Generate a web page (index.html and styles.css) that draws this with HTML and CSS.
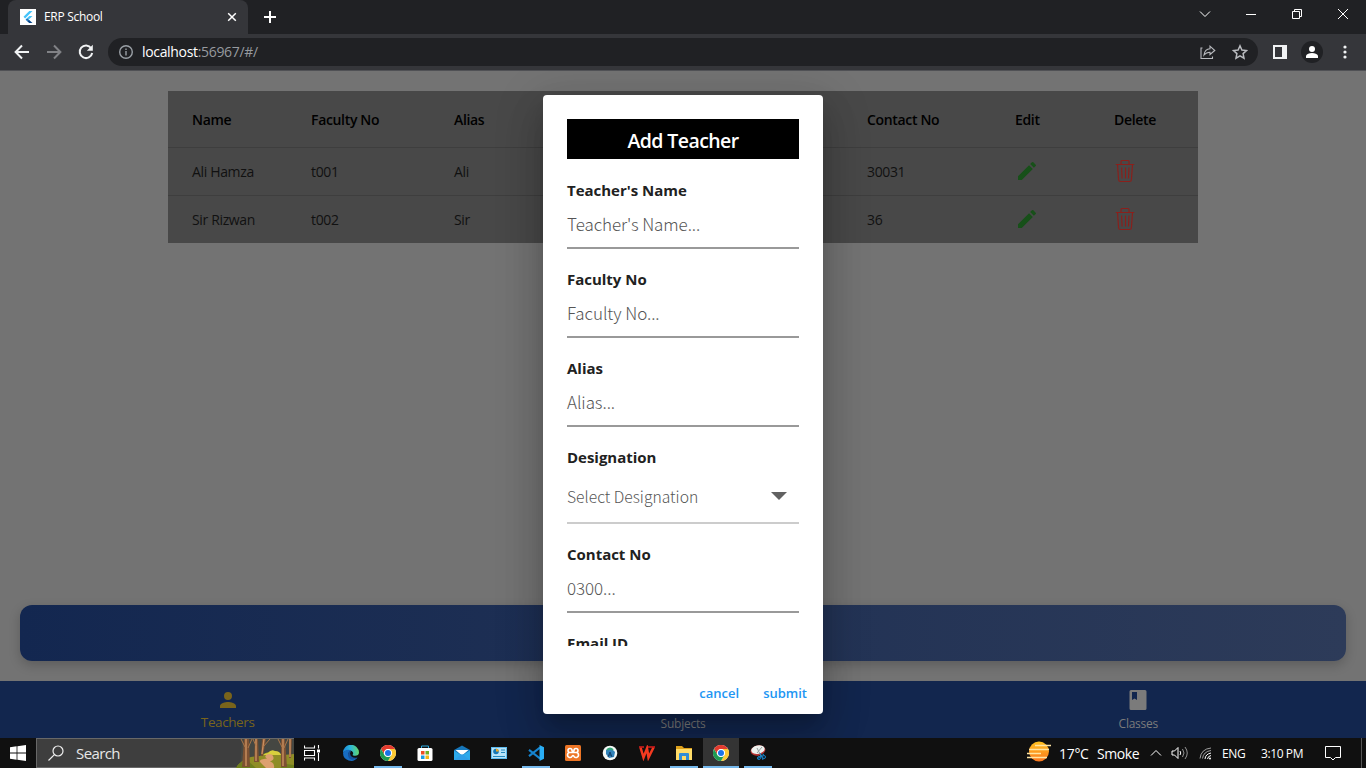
FILE: index.html
```html
<!DOCTYPE html>
<html lang="en">
<head>
<meta charset="utf-8">
<title>ERP School</title>
<link rel="stylesheet" href="styles.css">
</head>
<body>
<svg class="defs" width="0" height="0">
  <defs>
    <linearGradient id="edge" x1="0" y1="0" x2="1" y2="0"><stop offset="0" stop-color="#1b86d8"/><stop offset=".45" stop-color="#2bb5dc"/><stop offset="1" stop-color="#62d56c"/></linearGradient>
    <linearGradient id="sun" x1="0" y1="0" x2="0" y2="1"><stop offset="0" stop-color="#ffc21f"/><stop offset="1" stop-color="#fb761e"/></linearGradient>
    <symbol id="chrome" viewBox="0 0 24 24">
      <circle cx="12" cy="12" r="12" fill="#fff"/>
      <path d="M1.6 6A12 12 0 0 1 22.4 6H12a6 6 0 0 0-5.2 9z" fill="#e33b2e"/>
      <path d="M22.4 6A12 12 0 0 1 12 24l5.2-9A6 6 0 0 0 12 6z" fill="#fcc934"/>
      <path d="M12 24A12 12 0 0 1 1.6 6l5.2 9a6 6 0 0 0 10.4 0z" fill="#1e9b52"/>
      <circle cx="12" cy="12" r="5.8" fill="#fff"/><circle cx="12" cy="12" r="4.5" fill="#1a73e8"/>
    </symbol>
    <symbol id="pencil" viewBox="0 0 24 24"><path d="M3 17.25V21h3.75L17.81 9.94l-3.75-3.75L3 17.25zM20.71 7.04a1 1 0 0 0 0-1.41l-2.34-2.34a1 1 0 0 0-1.41 0l-1.83 1.83 3.75 3.75 1.83-1.83z"/></symbol>
    <symbol id="trash" viewBox="0 0 20 24"><path d="M.8 5.5h18.400M6 5V2.600q0-1.100 1.100-1.100h5.800q1.100 0 1.100 1.100V5M2.500 5.500l1.100 15.200q.1 1.800 1.900 1.800h9q1.800 0 1.900-1.800L17.500 5.500M6.600 8.500l.5 11M10.500 8.500v11M14 8.500l-.5 11" fill="none" stroke="currentColor" stroke-width="1.150"/></symbol>
    <symbol id="person" viewBox="0 0 24 24"><path d="M12 12a4 4 0 1 0 0-8 4 4 0 0 0 0 8zm0 2c-2.67 0-8 1.340-8 4v2h16v-2c0-2.660-5.330-4-8-4z"/></symbol>
  </defs>
</svg>
<header class="browser">
  <div class="tabstrip">
    <div class="tab">
      <svg class="favicon" viewBox="0 0 16 16"><path fill="#fff" d="M0 0h16v16H0z"/><path fill="#45c4fa" d="M9.300 2h3.200L5.100 9.400 3.500 7.800zM9.300 7h3.200L8.800 10.600 7.200 9z"/><path fill="#1679c4" d="M7.200 9l1.700 1.700-1.700 1.600-1.600-1.600z"/><path fill="#06488e" d="M7.200 12.300l1.700-1.600 3.600 3.400H9.200z"/></svg>
      <span class="tab-title">ERP School</span>
      <svg class="tab-close" viewBox="0 0 10 10"><path d="M1.200 1.200l7.600 7.600M8.800 1.200L1.200 8.800"/></svg>
    </div>
    <svg class="new-tab" viewBox="0 0 12 12"><path d="M6 0v12M0 6h12"/></svg>
    <div class="window-buttons">
      <svg viewBox="0 0 12 12"><path d="M1 3.500l5 5 5-5"/></svg>
      <svg viewBox="0 0 12 12"><path d="M1 6.500h10"/></svg>
      <svg viewBox="0 0 12 12"><path d="M1.500 3.500h7v7h-7zM3.500 3.500v-2h7v7h-2"/></svg>
      <svg viewBox="0 0 12 12"><path d="M1 1l10 10M11 1L1 11"/></svg>
    </div>
  </div>
  <div class="toolbar">
    <svg class="tool" viewBox="0 0 16 16"><path d="M15 8H2M8 1.500L1.600 8 8 14.500"/></svg>
    <svg class="tool faded" viewBox="0 0 16 16"><path d="M1 8h13M8 1.500L14.400 8 8 14.500"/></svg>
    <svg class="tool" viewBox="0 0 16 16"><path d="M13.200 4.200A6.300 6.300 0 1 0 14.200 9"/><path class="solid" d="M14.800.8v6H8.800z"/></svg>
    <div class="address">
      <svg class="info" viewBox="0 0 14 14"><circle cx="7" cy="7" r="6.300"/><path d="M7 6v4.500M7 3.400v1.500"/></svg>
      <span class="url">localhost<span>:56967/#/</span></span>
      <svg class="share" viewBox="0 0 16 16"><path d="M2.500 4H1v10.500h11.500V12.500M4 11c.6-4 3-6 6-6.200V2.200l4.800 4.300-4.800 4V8.200c-3 0-4.400.8-6 2.800z"/></svg>
      <svg class="star" viewBox="0 0 16 16"><path d="M8 1.800l1.900 4.200 4.600.5-3.400 3.100.9 4.600L8 11.900l-4 2.300.9-4.600L1.500 6.500l4.600-.5z"/></svg>
    </div>
    <svg class="side" viewBox="0 0 14 14"><path d="M0 0h14v14H0z" fill="#f1f3f4"/><path d="M2 2h7v10H2z" fill="#35363a"/></svg>
    <span class="avatar"><svg viewBox="0 0 12 12"><circle cx="6" cy="3" r="3"/><path d="M0 12V9.500Q1.500 7 6 7t6 2.500V12z"/></svg></span>
    <svg class="dots" viewBox="0 0 4 14"><circle cx="2" cy="2" r="1.600"/><circle cx="2" cy="7" r="1.600"/><circle cx="2" cy="12" r="1.600"/></svg>
  </div>
</header>
<main class="page">
  <section class="teachers">
    <div class="row head"><b>Name</b><b>Faculty No</b><b>Alias</b><b>Contact No</b><b>Edit</b><b>Delete</b></div>
    <div class="row"><span>Ali Hamza</span><span>t001</span><span>Ali</span><span>30031</span><svg class="edit"><use href="#pencil"/></svg><svg class="delete"><use href="#trash"/></svg></div>
    <div class="row"><span>Sir Rizwan</span><span>t002</span><span>Sir</span><span>36</span><svg class="edit"><use href="#pencil"/></svg><svg class="delete"><use href="#trash"/></svg></div>
  </section>
  <div class="banner"></div>
  <nav class="bottom-nav">
    <div class="nav-item active"><svg><use href="#person"/></svg><span>Teachers</span></div>
    <div class="nav-item"><svg></svg><span>Subjects</span></div>
    <div class="nav-item"><svg viewBox="0 0 24 24"><path fill-rule="evenodd" d="M19 2H5Q3.500 2 3.500 3.500v17Q3.500 22 5 22h14q1.500 0 1.500-1.500v-17Q20.500 2 19 2zM6 4h5v8l-2.500-1.500L6 12z"/></svg><span>Classes</span></div>
  </nav>
  <div class="dialog">
    <div class="dialog-body">
      <h1>Add Teacher</h1>
      <div class="field"><label>Teacher's Name</label><div class="value">Teacher's Name...</div></div>
      <div class="field"><label>Faculty No</label><div class="value">Faculty No...</div></div>
      <div class="field"><label>Alias</label><div class="value">Alias...</div></div>
      <div class="field select"><label>Designation</label><div class="value">Select Designation<svg viewBox="0 0 16 8"><path d="M0 0h16L8 8z"/></svg></div></div>
      <div class="field"><label>Contact No</label><div class="value">0300...</div></div>
      <div class="field"><label>Email ID</label></div>
    </div>
    <div class="actions"><span>cancel</span><span>submit</span></div>
  </div>
</main>
<footer class="taskbar">
  <div class="start"><svg viewBox="0 0 16 16"><path d="M0 2.200l6.600-.9v6.200H0zM7.400 1.200L16 0v7.500H7.400zM0 8.400h6.600v6.300L0 13.800zM7.400 8.400H16V16l-8.600-1.200z"/></svg></div>
  <div class="search">
    <svg class="lens" viewBox="0 0 16 16"><circle cx="10" cy="6" r="5"/><path d="M6.400 9.600L.5 15.500"/></svg>
    <span>Search</span>
    <svg class="forest" viewBox="0 0 58 29">
      <path fill="#454742" d="M6 0h52v29H4z"/>
      <path fill="#8f8d26" d="M0 29q7-12 24-12 8-5 14-5l9 4 11-1v14z"/>
      <path fill="#d8cf3d" d="M27 16q2-2 5-2 3-4 7-2 5 0 6 4z"/>
      <path fill="#6e7f1d" d="M0 29q3-6 11-8l9 8zM44 29l6-4 8 1v3z"/>
      <path d="M32 15q-5 2-1 4.500-10 1-6 4.500l5 5h8q1-5-4-6.500 6-2 2-7z" fill="#dda070"/>
      <g fill="#7d5132"><path d="M8 0h5l1 28H6z"/><path d="M19 0h3l1 23h-5z"/><path d="M26 0h4l-3 17h-2z"/><path d="M45 0h4l2 28h-6z"/><path d="M53 0h3l-1 19h-2z"/></g>
      <path d="M10 0v27M20 0v22M28 0l-2 15M47 0v27M54 0v18" stroke="#c98f60" stroke-width="1.400"/>
      <path d="M5 0l4 8M16 0l-4 9M17 0l3 7M34 0l-7 8M42 0l4 8M52 0l-4 9" stroke="#a9764a" fill="none"/>
    </svg>
  </div>
  <div class="apps">
    <div class="taskview"><svg viewBox="0 0 16 16"><path class="line" d="M.5.500V3h10V.5M.5 15.500V13h10v2.500M.5 5.500h10v5H.5zM14.500 0v3.500M14.500 8v8"/><path fill="#fff" d="M13 4.500h3v3h-3z"/></svg></div>
    <div><svg viewBox="0 0 16 16"><path d="M0 8a8 8 0 0 1 16-.5c0 3-3 3.800-5.800 3-1.200-.5 0-1 0-2.500C10 5 3 3.500 0 8z" fill="url(#edge)"/><path d="M0 8c2-3.500 6-4 8-2-3 .5-4 5 .5 7 2 .8 4.500.5 6-.5A8 8 0 0 1 0 8z" fill="#176cc2"/><path d="M8 6C4.500 7 4 11.500 7 14c2 1.500 5 .5 7.500-1.500-3 1-7 0-7.500-4z" fill="#15519e"/></svg></div>
    <div class="open"><svg><use href="#chrome"/></svg></div>
    <div><svg viewBox="0 0 16 16"><path d="M4.500 4V1h7v3" fill="none" stroke="#2dabe1"/><rect x=".5" y="3" width="15" height="13" rx="1.500" fill="#fff"/><path fill="#ef4c24" d="M4 6h3.500v3.500H4z"/><path fill="#70ae27" d="M8.500 6H12v3.500H8.500z"/><path fill="#199be4" d="M4 10.500h3.500V14H4z"/><path fill="#f4b517" d="M8.500 10.500H12V14H8.500z"/></svg></div>
    <div><svg viewBox="0 0 16 16"><path fill="#1676ba" d="M0 5l8-4.500L16 5v10H0z"/><path fill="#fff" d="M1.500 5h13L8 10.500z"/><path fill="#2daaeb" d="M0 5.500l8 5 8-5V15H0z"/><path fill="#2f9fe8" d="M0 15l8-6 8 6z"/></svg></div>
    <div><svg viewBox="0 0 16 16"><rect y="2" width="16" height="12" fill="#5fbdf0"/><path fill="#b9e3f8" d="M1 3h14v10H1z"/><circle cx="5" cy="6.500" r="2.800" fill="#1577b5"/><path fill="#f2a81c" d="M5 6.500V3.700a2.800 2.800 0 0 1 2.800 2.800z"/><path stroke="#258abf" d="M10 5h4M10 7.500h4M2 11.500h12"/></svg></div>
    <div class="open"><svg viewBox="0 0 16 16"><path d="M1 4.800l11 8.700M1 11.200l11-8.700" stroke="#1684cf" stroke-width="2.200"/><path fill="#2aaef5" d="M11.500 0L16 2.200v11.600L11.500 16z"/></svg></div>
    <div><svg viewBox="0 0 16 16"><rect width="16" height="16" rx="1.500" fill="#ed7525"/><path d="M5 3.500a2 2 0 1 0 0 4h6a2 2 0 1 0-2-2c0 1-2 1-2 0a2 2 0 0 0-2-2zM5 7.500a2.500 2.500 0 1 0 2.300 3.500q.7-1 1.400 0A2.500 2.500 0 1 0 11 7.500" fill="none" stroke="#fff" stroke-width="1.600"/></svg></div>
    <div><svg viewBox="0 0 16 16"><circle cx="8" cy="8" r="7.300" fill="#f5f9f7"/><path d="M4 5l5-2 4 4-1 5-5 1-3-4z" fill="#3182ba"/><path d="M5 5q3-3 6 0" stroke="#36a777" fill="none" stroke-width="1.800"/><path d="M6 12l2-5 2 5M7 10h2" stroke="#123e69" fill="none"/></svg></div>
    <div><svg viewBox="0 0 16 16"><path d="M1.500 2.500l3 10 3.500-9 1.500 9 5-10" stroke="#f33a20" stroke-width="2.500" fill="none"/><path d="M0 2h5M9 2h7" stroke="#d91b1b" stroke-width="1.500"/></svg></div>
    <div class="open"><svg viewBox="0 0 16 16"><path fill="#dda01b" d="M0 1h6l2 2h8v3H0z"/><path fill="#ffdc68" d="M0 4h16v11H0z"/><path fill="#318dd6" d="M3 15V9q0-1 1-1h8q1 0 1 1v6h-3v-4H6v4z"/></svg></div>
    <div class="open current"><svg><use href="#chrome"/></svg></div>
    <div class="open"><svg viewBox="0 0 16 16"><ellipse cx="8" cy="5.500" rx="7.500" ry="5" fill="#b73434" transform="rotate(-12 8 5.500)"/><ellipse cx="8" cy="4.700" rx="6.800" ry="4.200" fill="#edf1ee" transform="rotate(-12 8 5)"/><path d="M7 3l4 8M12 2L7 8" stroke="#929c9d" fill="none"/><path d="M7 14l7-5M10 8l3 7" stroke="#1881c5" fill="none"/><circle cx="9" cy="13" r="1.500" fill="none" stroke="#1881c5"/><circle cx="14" cy="12" r="1.500" fill="none" stroke="#1881c5"/></svg></div>
  </div>
  <div class="tray">
    <svg class="weather" viewBox="0 0 24 21"><circle cx="12" cy="10.500" r="10" fill="url(#sun)"/><path stroke="#ffe4a1" stroke-width="1.500" d="M8 4.500h16M2 8.500h20M0 12.500h14M0 16.500h20"/></svg>
    <span class="temp">17°C</span><span class="smoke">Smoke</span>
    <svg class="up" viewBox="0 0 12 12"><path d="M1 8.500l5-5 5 5"/></svg>
    <svg class="volume" viewBox="0 0 17 14"><path d="M1 5h2.500L7 1.500v11L3.500 9H1z"/><path d="M9 5q1.500 2 0 4"/><path opacity=".55" d="M11.500 3q3 4 0 8M14 1q4.500 6 0 12"/></svg>
    <svg class="wifi" viewBox="0 0 13 13"><path opacity=".6" d="M1 11.500Q2 2 12 1M3.500 11.500Q4.500 4.500 12 3.500"/><path d="M6 12q.5-5 6-6M8.500 12q.5-3 3.500-3.500"/><circle cx="11" cy="11.500" r="1" fill="#fff" stroke="none"/></svg>
    <span class="lang">ENG</span><span class="clock">3:10 PM</span>
    <svg class="notice" viewBox="0 0 16 16"><path d="M.5 1.500h15v11h-5L8 15l-2.500-2.500h-5z"/></svg>
  </div>
</footer>
</body>
</html>
```
FILE: styles.css
```css
* { box-sizing: border-box; }
body { margin: 0; width: 1366px; height: 768px; overflow: hidden; display: flex; flex-direction: column; font-family: "Open Sans", "Noto Sans", sans-serif; font-size: 14px; }
svg { display: block; flex: none; }
.defs { position: absolute; }

.browser { height: 71px; background: #35363a; color: #fff; border-bottom: 1px solid #505155; }
.tabstrip { height: 34px; display: flex; align-items: center; background: #202124; }
.tab { width: 240px; height: 34px; margin-left: 8px; padding: 0 11px 0 12px; display: flex; align-items: center; background: #35363a; border-radius: 8px 8px 0 0; }
.favicon { width: 16px; height: 16px; }
.tab-title { margin-left: 8px; padding-bottom: 1px; font-size: 12px; letter-spacing: -.3px; flex: 1; }
.tab-close { width: 10px; height: 10px; fill: none; stroke: #fff; stroke-width: 1.5; }
.new-tab { width: 12px; height: 12px; margin-left: 16px; stroke: #fff; stroke-width: 2; }
.window-buttons { margin-left: auto; margin-right: 17px; padding-bottom: 6px; display: flex; gap: 34px; }
.window-buttons svg { width: 12px; height: 12px; fill: none; stroke: #fff; }
.toolbar { height: 36px; display: flex; align-items: center; padding-left: 14px; }
.tool { width: 16px; height: 16px; margin-right: 16px; fill: none; stroke: #f1f3f4; stroke-width: 2; }
.tool.faded { stroke: #818286; }
.tool .solid { fill: #f1f3f4; stroke: none; }
.tool:nth-child(3) { margin-right: 14px; }
.address { width: 1150px; height: 28px; padding: 0 10px 0 11px; display: flex; align-items: center; background: #202124; border-radius: 14px; }
.info { width: 14px; height: 14px; fill: none; stroke: #9aa0a6; stroke-width: 1.4; }
.url { margin-left: 9px; padding-bottom: 1px; flex: 1; letter-spacing: -.33px; }
.url span { color: #969a9f; }
.share, .star { width: 16px; height: 16px; fill: none; stroke: #b9bbbf; stroke-width: 1.1; }
.star { margin-left: 16px; stroke-width: 1.5; }
.side { width: 14px; height: 14px; margin-left: 15px; }
.avatar { width: 22px; height: 22px; margin-left: 14px; border-radius: 50%; background: #202124; display: grid; place-items: center; }
.avatar svg { width: 12px; height: 12px; fill: #fff; }
.dots { width: 4px; height: 14px; margin-left: 20px; fill: #f1f3f4; }

.page { position: relative; height: 667px; overflow: hidden; background: #737373; display: flex; flex-direction: column; }
.teachers { width: 1030px; margin: 20px auto 0; background: #484848; color: #111; }
.row { height: 48px; padding-left: 24px; display: grid; grid-template-columns: 119px 143px 413px 148px 99px 1fr; align-items: center; border-top: 1px solid #3e3e3e; letter-spacing: -.35px; }
.row.head { height: 56px; border-top: 0; color: #000; letter-spacing: -.33px; }
.row b { font-weight: 600; }
.edit { width: 24px; height: 24px; margin-bottom: 2px; fill: #175019; }
.delete { width: 20px; height: 24px; margin: 0 0 2px 1px; color: #8b1f1b; }
.banner { height: 56px; margin: auto 20px 20px; border-radius: 12px; background: linear-gradient(90deg, #132750, #2d3b59); box-shadow: 0 4px 12px rgba(0,0,0,.2); }
.bottom-nav { height: 57px; display: flex; background: #12264e; }
.nav-item { flex: 1; display: flex; flex-direction: column; align-items: center; padding-top: 7px; color: #7b7b7b; font-size: 12px; letter-spacing: -.25px; line-height: 17px; }
.nav-item svg { width: 24px; height: 24px; fill: currentColor; margin-bottom: 3px; }
.nav-item.active { color: #79641b; font-size: 13.5px; letter-spacing: -.4px; }
.nav-item.active svg { margin-bottom: 2px; }

/* Modal card above the dimmed page */
.dialog { position: absolute; left: 543px; top: 24px; width: 280px; height: 619px; border-radius: 4px; background: #fff; box-shadow: 0 11px 15px -7px rgba(0,0,0,.2), 0 24px 38px 3px rgba(0,0,0,.14), 0 9px 46px 8px rgba(0,0,0,.12); }
.dialog-body { height: 551px; padding: 24px 24px 0; overflow: hidden; }
.dialog h1 { height: 40px; margin: 0 0 20px; background: #000; color: #fff; text-align: center; font-size: 19.5px; line-height: 43px; font-weight: 650; letter-spacing: -.6px; }
.field { height: 89px; }
.field label { display: block; height: 24px; line-height: 22px; font-weight: 700; font-size: 15px; color: #212121; letter-spacing: -.02px; }
.value { height: 46px; padding-bottom: 4px; display: flex; align-items: center; border-bottom: 2px solid #999; font-family: "Noto Sans CJK JP", "Noto Sans", sans-serif; font-weight: 300; font-size: 17px; letter-spacing: -.08px; color: #555; white-space: nowrap; }
.field.select { height: 97px; }
.select .value { height: 54px; border-color: #ccc; font-size: 15.7px; letter-spacing: 0; padding: 0 12px 0 0; justify-content: space-between; }
.select svg { width: 16px; height: 8px; fill: #616161; }
.actions { display: flex; justify-content: flex-end; gap: 24px; padding: 37px 16px 0 0; color: #2196f3; font-size: 13px; line-height: 20px; font-weight: 600; }

.taskbar { height: 30px; background: #101010; display: flex; color: #fff; }
.start { width: 36px; display: grid; place-items: center; }
.start svg { width: 16px; height: 16px; fill: #fff; }
.search { width: 258px; border: 1px solid #686868; border-right: 0; background: #3e3e3e; display: flex; align-items: center; padding-left: 11px; font-size: 15px; letter-spacing: -.6px; color: #e7e7e7; }
.lens { width: 16px; height: 16px; margin-right: 12px; fill: none; stroke: #eee; stroke-width: 1.2; }
.forest { width: 58px; height: 29px; margin-left: auto; }
.apps { margin-left: 2px; display: grid; grid-template-columns: repeat(13, 36px); column-gap: 1px; }
.apps > div { display: grid; place-items: center; }
.apps svg { width: 16px; height: 16px; }
.apps > .taskview { padding-right: 4px; }
.apps .line { fill: none; stroke: #fff; stroke-width: 1.1; }
.open { background: linear-gradient(#76b9ed, #76b9ed) center bottom / 28px 2px no-repeat; }
.open.current { background-color: #343434; background-size: 36px 2px; }
.tray { margin-left: auto; width: 335px; display: flex; align-items: center; border-right: 1px solid #555; margin-right: 4px; }
.weather { width: 24px; height: 21px; margin-bottom: 4px; }
.tray svg:not(.weather) { fill: none; stroke: #fff; }
.temp { margin-left: 8px; width: 38px; font-size: 14px; letter-spacing: -.3px; }
.smoke { width: 53px; font-size: 14px; letter-spacing: -.4px; }
.up { width: 12px; height: 12px; }
.volume { width: 17px; height: 14px; margin-left: 9px; }
.wifi { width: 13px; height: 13px; margin-left: 11px; }
.lang { margin-left: 10px; width: 39px; font-size: 12px; letter-spacing: -.4px; }
.clock { width: 64px; font-size: 12px; letter-spacing: -.4px; }
.notice { width: 16px; height: 16px; }
```
